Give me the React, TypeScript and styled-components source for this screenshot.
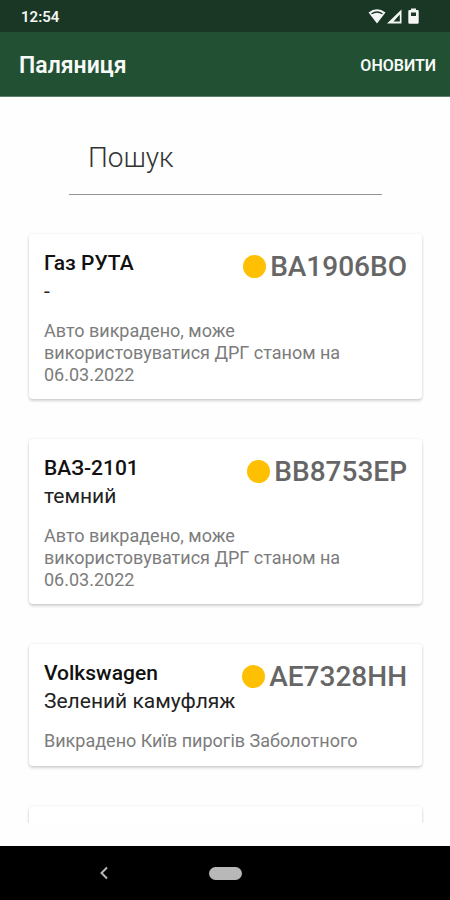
import React from "react";
import styled, { createGlobalStyle } from "styled-components";

const GlobalStyle = createGlobalStyle`
  *, *::before, *::after { box-sizing: border-box; }
  html, body { margin: 0; padding: 0; }
  body {
    background: #fefefe;
    font-family: Roboto, "Noto Sans", sans-serif;
    color: #111111;
  }
  h1, h2, p, ul { margin: 0; padding: 0; }
`;

const Screen = styled.div`
  display: flex;
  flex-direction: column;
  height: 100vh;
  background: #fefefe;
`;

const StatusBar = styled.div`
  display: flex;
  align-items: center;
  justify-content: space-between;
  flex: none;
  height: 32px;
  padding: 2px 30px 0 21px;
  background: #1a3625;
  color: #f4f6f4;
`;

const Clock = styled.time`
  font-size: 15px;
  font-weight: 600;
  line-height: 20px;
`;

const StatusIcons = styled.div`
  display: flex;
  align-items: center;
`;

const AppBar = styled.header`
  display: flex;
  align-items: center;
  justify-content: space-between;
  flex: none;
  height: 65px;
  padding: 4px 14px 0 19px;
  background: #225033;
  border-bottom: 1px solid #5f7d6b;
  color: #f7faf8;
`;

const AppTitle = styled.h1`
  font-size: 23px;
  font-weight: 600;
  line-height: 32px;
`;

const RefreshButton = styled.button`
  padding: 0;
  border: 0;
  background: none;
  color: inherit;
  font: inherit;
  font-size: 16px;
  font-weight: 600;
  line-height: 24px;
  cursor: pointer;
`;

const SearchForm = styled.form`
  display: flex;
  flex: none;
  padding: 24px 68px 0 69px;
`;

const SearchInput = styled.input`
  flex: 1;
  min-width: 0;
  height: 74px;
  padding: 0 19px;
  border: 0;
  border-bottom: 1px solid #949494;
  border-radius: 0;
  outline: none;
  background: transparent;
  color: #222222;
  font: inherit;
  font-size: 28px;
  font-weight: 300;

  &::placeholder {
    color: #333333;
    opacity: 1;
  }
`;

const CardList = styled.ul`
  display: flex;
  flex-direction: column;
  flex: 1;
  gap: 40px;
  min-height: 0;
  margin: 0 0 23px;
  padding: 39px 28px 0 29px;
  overflow: hidden;
  list-style: none;
`;

const Card = styled.li`
  flex: none;
  min-height: 122px;
  padding: 15px 15px 13px;
  border-radius: 4px;
  background: #ffffff;
  box-shadow: 0 2px 3px rgba(0, 0, 0, 0.17), 0 0 3px rgba(0, 0, 0, 0.08);
`;

const CardHead = styled.div`
  display: flex;
  align-items: flex-start;
  justify-content: space-between;
`;

const CarName = styled.h2`
  font-size: 21px;
  font-weight: 500;
  line-height: 28px;
`;

const CarColor = styled.p`
  font-size: 21px;
  font-weight: 400;
  line-height: 28px;
  color: #222222;
`;

const Plate = styled.div`
  display: flex;
  align-items: center;
  gap: 4px;
  height: 36px;
  font-size: 28px;
  font-weight: 500;
  line-height: 36px;
  color: #666666;
`;

const Dot = styled.span`
  flex: none;
  width: 23px;
  height: 23px;
  margin-bottom: 2px;
  border-radius: 50%;
  background: #ffc003;
`;

const Note = styled.p`
  max-width: 320px;
  margin-top: 15px;
  font-size: 18px;
  font-weight: 400;
  line-height: 22px;
  color: #7c7c7c;
`;

const NavBar = styled.nav`
  display: grid;
  grid-template-columns: 1fr auto 1fr;
  align-items: center;
  flex: none;
  height: 54px;
  background: #000000;
`;

const NavButton = styled.button`
  display: flex;
  justify-self: center;
  padding: 0;
  border: 0;
  background: none;
  color: #b8b8b8;
  cursor: pointer;
`;

const HomePill = styled.span`
  width: 33px;
  height: 13px;
  border-radius: 7px;
  background: #b8b8b8;
`;

interface Car {
  name: string;
  color: string;
  plate: string;
  note: string;
}

const cars: Car[] = [
  {
    name: "Газ РУТА",
    color: "-",
    plate: "BA1906BO",
    note: "Авто викрадено, може використовуватися ДРГ станом на 06.03.2022",
  },
  {
    name: "ВАЗ-2101",
    color: "темний",
    plate: "BB8753EP",
    note: "Авто викрадено, може використовуватися ДРГ станом на 06.03.2022",
  },
  {
    name: "Volkswagen",
    color: "Зелений камуфляж",
    plate: "AE7328HH",
    note: "Викрадено Київ пирогів Заболотного",
  },
];

function CarCard({ car }: { car: Car }) {
  return (
    <Card>
      <CardHead>
        <div>
          <CarName>{car.name}</CarName>
          <CarColor>{car.color}</CarColor>
        </div>
        <Plate>
          <Dot />
          {car.plate}
        </Plate>
      </CardHead>
      <Note>{car.note}</Note>
    </Card>
  );
}

export default function App() {
  return (
    <>
      <GlobalStyle />
      <Screen>
        <StatusBar>
          <Clock>12:54</Clock>
          <StatusIcons>
            <svg width="52" height="18" viewBox="0 0 52 18" fill="none" aria-hidden="true">
              <path d="M0.500 4.500Q9 -2 17.500 4.500L9 15.500Z" fill="#f4f6f4" />
              <path d="M3.500 5.800Q9 2.200 14.500 5.800" stroke="#1a3625" strokeWidth="1.300" />
              <path d="M33.500 1.500V15.500H19Z" fill="#f4f6f4" />
              <path d="M31.800 6.500V13.500H25.500Z" fill="#1a3625" />
              <path d="M43 0.500h5v1.500h1.500a1.200 1.200 0 0 1 1.200 1.200v11.300a1.200 1.200 0 0 1-1.200 1.200h-8a1.200 1.200 0 0 1-1.200-1.200v-11.300a1.200 1.200 0 0 1 1.200-1.200h1.500z" fill="#f4f6f4" />
              <path d="M43 4.500h5v3.500h-5z" fill="#1a3625" />
            </svg>
          </StatusIcons>
        </StatusBar>
        <AppBar>
          <AppTitle>Паляниця</AppTitle>
          <RefreshButton type="button">ОНОВИТИ</RefreshButton>
        </AppBar>
        <SearchForm role="search" onSubmit={(e) => e.preventDefault()}>
          <SearchInput type="text" placeholder="Пошук" aria-label="Пошук" />
        </SearchForm>
        <CardList>
          {cars.map((car) => (
            <CarCard key={car.plate} car={car} />
          ))}
          <Card />
        </CardList>
        <NavBar>
          <NavButton type="button" aria-label="Назад">
            <svg width="10" height="14" viewBox="0 0 10 14" fill="none" stroke="currentColor" strokeWidth="2" aria-hidden="true">
              <path d="M8 1.500L2.500 7L8 12.500" />
            </svg>
          </NavButton>
          <NavButton type="button" aria-label="Додому">
            <HomePill />
          </NavButton>
        </NavBar>
      </Screen>
    </>
  );
}
